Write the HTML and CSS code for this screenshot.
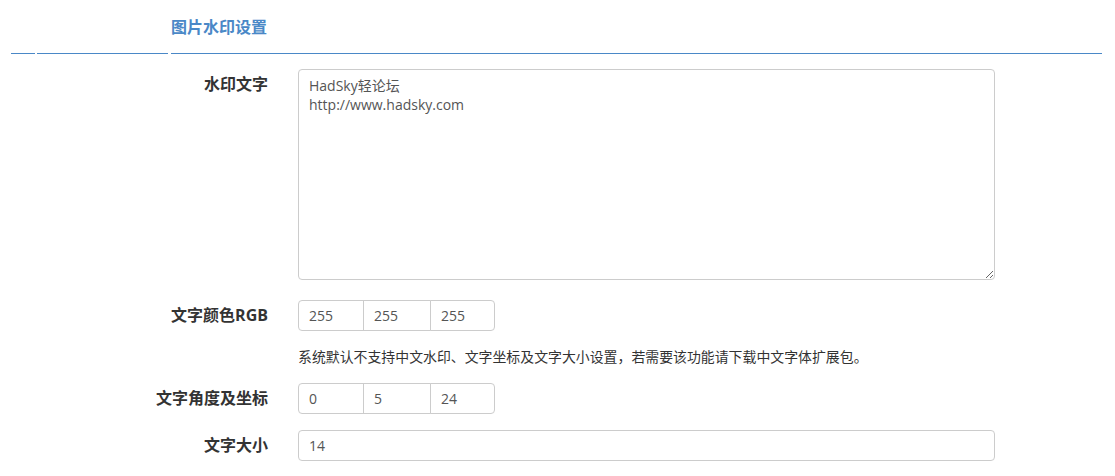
FILE: index.html
```html
<!DOCTYPE html>
<html lang="zh-CN">
<head>
    <meta charset="UTF-8">
    <title>图片水印设置</title>
    <link rel="stylesheet" href="styles.css">
</head>
<body>
    <div class="tabs">
        <div class="tab"></div>
        <div class="tab"></div>
        <div class="tab active">图片水印设置</div>
    </div>
    <form class="form">
        <div class="row">
            <label class="label">水印文字</label>
            <div class="control">
                <textarea class="input area">HadSky轻论坛
http://www.hadsky.com</textarea>
            </div>
        </div>
        <div class="row">
            <label class="label">文字颜色RGB</label>
            <div class="control">
                <div class="group">
                    <input class="input g1" value="255">
                    <input class="input g2" value="255">
                    <input class="input g3" value="255">
                </div>
                <p class="hint">系统默认不支持中文水印、文字坐标及文字大小设置，若需要该功能请下载中文字体扩展包。</p>
            </div>
        </div>
        <div class="row">
            <label class="label">文字角度及坐标</label>
            <div class="control">
                <div class="group">
                    <input class="input g1" value="0">
                    <input class="input g2" value="5">
                    <input class="input g3" value="24">
                </div>
            </div>
        </div>
        <div class="row">
            <label class="label">文字大小</label>
            <div class="control">
                <input class="input wide" value="14">
            </div>
        </div>
    </form>
</body>
</html>
```
FILE: styles.css
```css
* {
    box-sizing: border-box;
}
body {
    margin: 0;
    background: #fff;
    color: #333;
    font-family: "Open Sans", "Noto Sans CJK SC", sans-serif;
    font-size: 14px;
}
.tabs {
    display: flex;
    gap: 2px;
    padding: 0 13px 0 11px;
    height: 54px;
}
.tab {
    border-bottom: 1px solid #4a88c7;
    width: 24px;
}
.tab:nth-child(2) {
    width: 131px;
}
.tab.active {
    flex: 1;
    margin-left: 1px;
    color: #4a88c7;
    font-weight: bold;
    font-size: 16px;
    line-height: 18px;
    padding-top: 18px;
}
.form {
    padding-top: 15px;
}
.row {
    display: flex;
    margin-bottom: 16px;
}
.label {
    width: 268px;
    margin-right: 30px;
    text-align: right;
    font-weight: bold;
    font-size: 16px;
    line-height: 18px;
    padding-top: 6px;
}
.control {
    width: 697px;
}
.input {
    display: block;
    font-family: inherit;
    font-size: 14px;
    color: #555;
    border: 1px solid #ccc;
    border-radius: 4px;
    padding: 6px 10px;
    height: 31px;
    line-height: 17px;
    outline: none;
    background: #fff;
}
.area {
    width: 100%;
    height: 211px;
    line-height: 19px;
    resize: vertical;
    margin-bottom: 4px;
}
.group {
    display: flex;
}
.group .input {
    border-radius: 0;
}
.g1 {
    width: 66px;
    border-radius: 4px 0 0 4px !important;
}
.g2 {
    width: 68px;
    margin-left: -1px;
}
.g3 {
    width: 65px;
    margin-left: -1px;
    border-radius: 0 4px 4px 0 !important;
}
.hint {
    margin: 17px 0 1px;
    font-size: 13.9px;
    line-height: 18px;
}
.wide {
    width: 100%;
}
```
